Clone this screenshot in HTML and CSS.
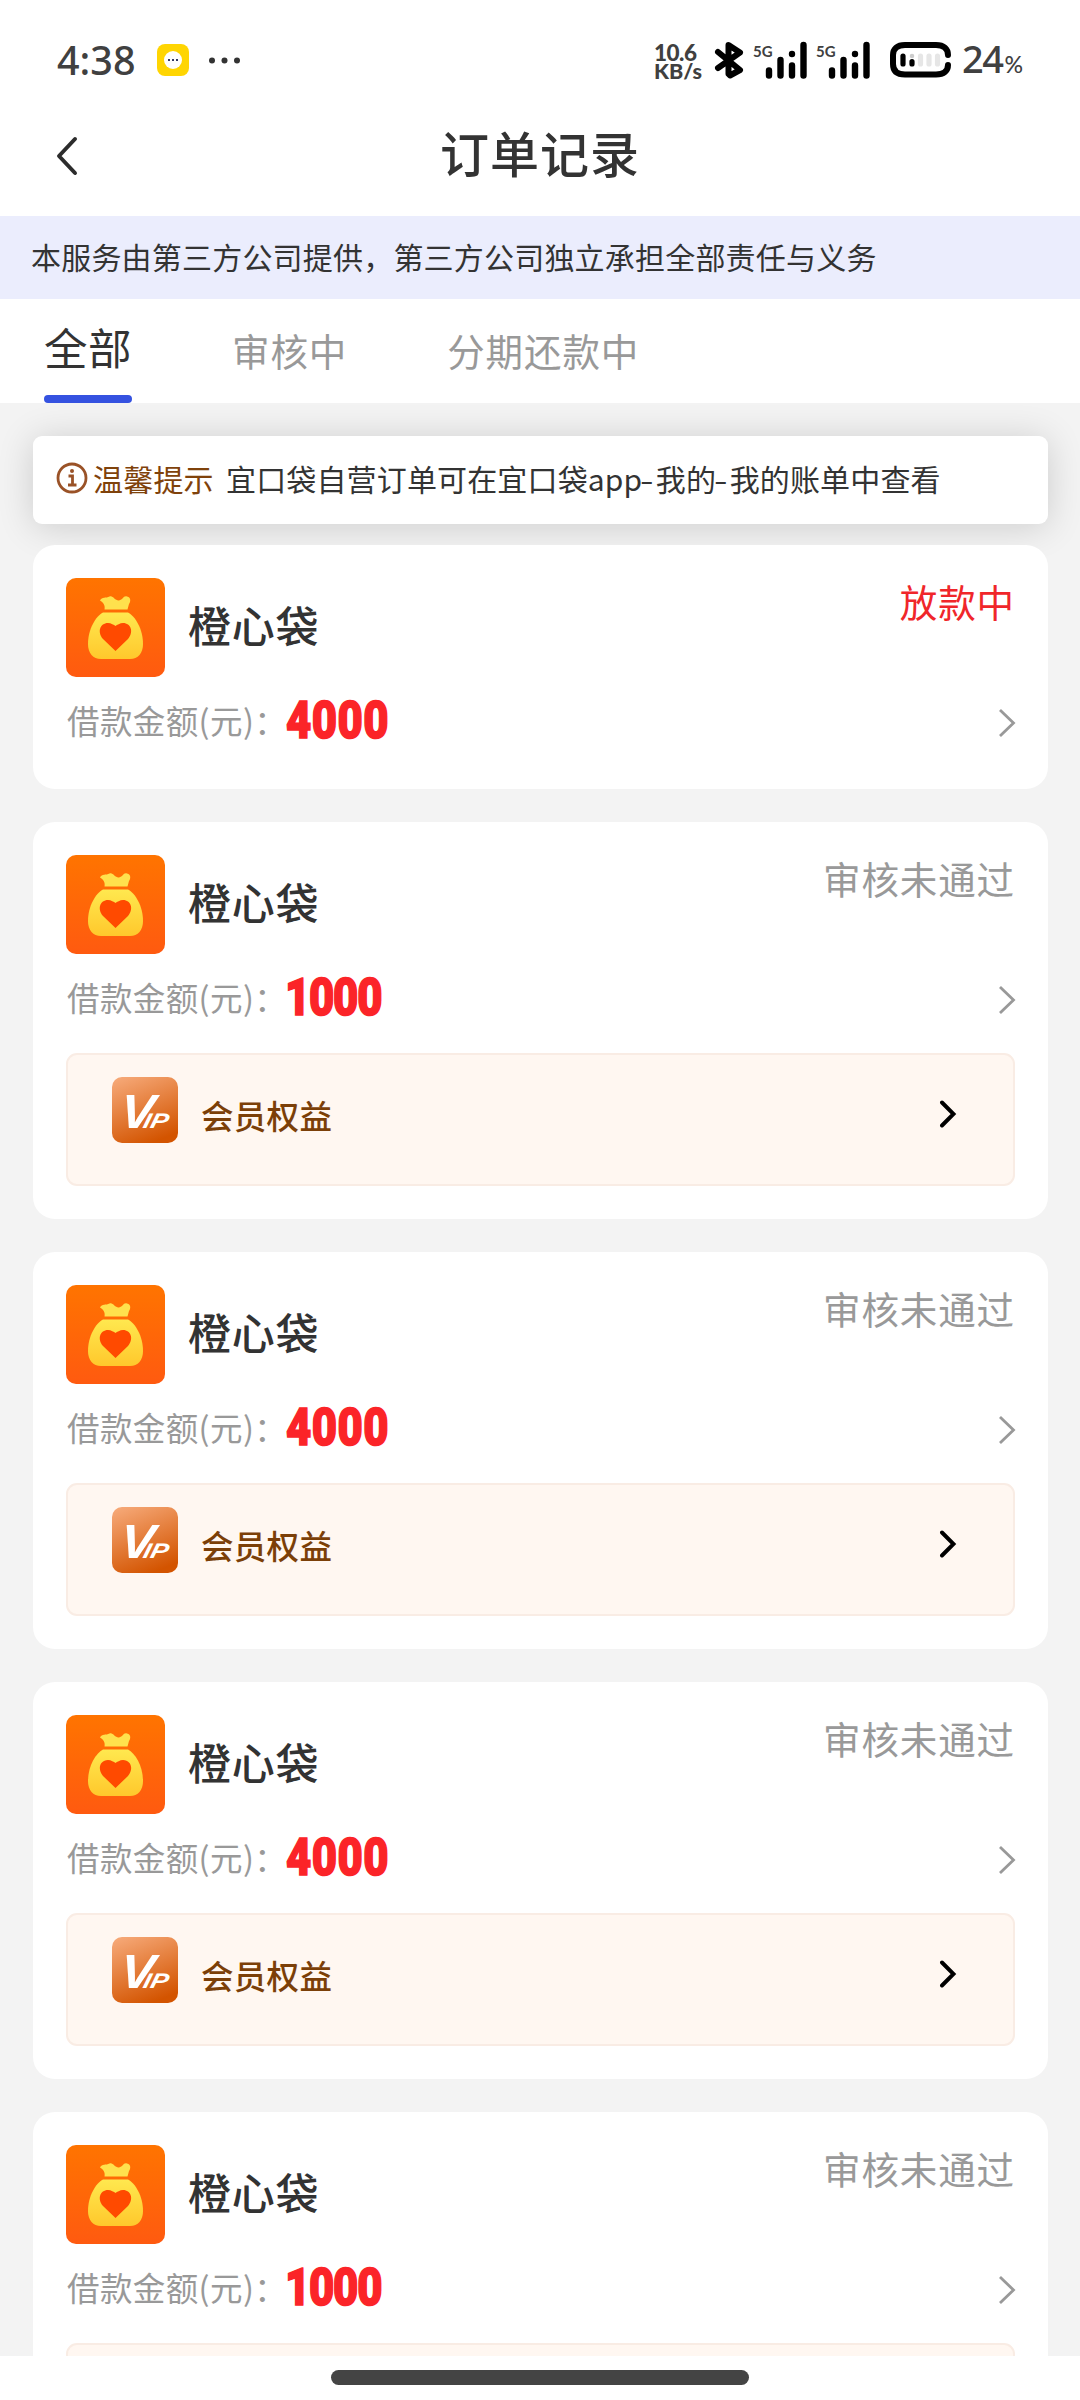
FILE: index.html
```html
<!DOCTYPE html>
<html lang="zh-CN">
<head>
<meta charset="utf-8">
<title>订单记录</title>
<link rel="stylesheet" href="styles.css">
</head>
<body>
<svg class="defs" width="0" height="0">
  <defs>
    <linearGradient id="orange" x1="0" y1="0" x2="0" y2="1"><stop offset="0" stop-color="#ff7400"/><stop offset="1" stop-color="#ff5a10"/></linearGradient>
    <linearGradient id="gold" x1="0" y1="0" x2="0" y2="1"><stop offset="0" stop-color="#ffe84f"/><stop offset="1" stop-color="#ffc82c"/></linearGradient>
    <linearGradient id="copper" x1="0.2" y1="0" x2="0.6" y2="1"><stop offset="0" stop-color="#f5a674"/><stop offset="1" stop-color="#d35400"/></linearGradient>
  </defs>
  <symbol id="logo" viewBox="0 0 99 99">
    <rect width="99" height="99" rx="10" fill="url(#orange)"/>
    <path d="M34 22.500C36 18.500 40 20.500 43.500 18.500C47 17 49 23 53 22.500C57 22 57 17.500 61 18.500C65.500 19.500 64.500 24 63 26L61.500 31.500H38.500C39.500 27 37 24.500 34 22.500Z" fill="#ffe14d"/>
    <path d="M37 34.500H62C69 38 77 51 77 66C77 75 72 81 64 81H35C27 81 22 75 22 66C22 51 30 38 37 34.500Z" fill="url(#gold)"/>
    <path d="M49.500 73L37 61C31 54 34 45 42 45C45 45 48 47 49.500 48C51 47 54 45 57 45C65 45 68 54 62 61Z" fill="#ff4a00"/>
  </symbol>
  <symbol id="vip" viewBox="0 0 66 66">
    <rect width="66" height="66" rx="10" fill="url(#copper)"/>
    <text class="vip-text" transform="translate(7 50.500) skewX(-6)" textLength="34" lengthAdjust="spacingAndGlyphs">V</text>
    <text class="vip-text vip-ip" transform="translate(30 50.500) skewX(-14)" textLength="25" lengthAdjust="spacingAndGlyphs">IP</text>
  </symbol>
  <symbol id="next" viewBox="0 0 18 30"><path d="M2 2L15.500 15L2 28" fill="none" stroke="currentColor" stroke-width="2.800"/></symbol>
  <symbol id="more" viewBox="0 0 18 28"><path d="M3 2.500L14.500 14L3 25.500" fill="none" stroke="currentColor" stroke-width="3.900" stroke-linecap="round"/></symbol>
  <symbol id="signal" viewBox="0 0 42 38">
    <path d="M4 29.500V34.500M15.500 19V34.500M27 24.500V34.500M27 12.900V13.100M38.500 4V34.500" fill="none" stroke="#000" stroke-width="6.400" stroke-linecap="round"/>
  </symbol>
</svg>

<header class="status-bar">
  <div class="clock">4:38</div>
  <svg class="app-badge" viewBox="0 0 32 32"><rect width="32" height="32" rx="8" fill="#ffd502"/><circle cx="16" cy="16" r="9" fill="#fff"/><path d="M11 15h2v2h-2zM15 15h2v2h-2zM19 15h2v2h-2z" fill="#333a66"/></svg>
  <svg class="dots" viewBox="0 0 31 7"><g fill="#333"><circle cx="3" cy="3.500" r="3"/><circle cx="15.500" cy="3.500" r="3"/><circle cx="28" cy="3.500" r="3"/></g></svg>
  <div class="speed"><span class="rate">10.6</span><span>KB/s</span></div>
  <svg class="bluetooth" viewBox="0 0 30 38"><path d="M4 11L26 29L16 34.500L14.500 33V4L26 11.500L4 27" fill="none" stroke="#000" stroke-width="6" stroke-linejoin="round" stroke-linecap="round"/></svg>
  <div class="network"><span>5G</span><svg><use href="#signal"/></svg></div>
  <div class="network second"><span>5G</span><svg><use href="#signal"/></svg></div>
  <svg class="battery" viewBox="0 0 61 36"><path d="M58 13C58 7 54 3 46 3H15C7 3 3 7 3 13V22C3 29 7 32.500 15 32.500H46C54 32.500 58 29 58 23" fill="none" stroke="#000" stroke-width="6" stroke-linecap="round"/><path d="M13 14V22M22 19.500V22" stroke="#000" stroke-width="5.200" stroke-linecap="round"/><path d="M22 14V14.100" stroke="#ccc" stroke-width="4.500" stroke-linecap="round"/><path d="M30.500 14V22M39 14V22M47.500 14V22" stroke="#e6e6e6" stroke-width="5.200" stroke-linecap="round"/></svg>
  <div class="percent">24<small>%</small></div>
</header>

<nav class="title-bar">
  <svg class="back" viewBox="0 0 24 40"><path d="M20 3L4 20L20 37" fill="none" stroke="#2c2c2c" stroke-width="4" stroke-linecap="round" stroke-linejoin="round"/></svg>
  <h1>订单记录</h1>
</nav>

<p class="banner">本服务由第三方公司提供，第三方公司独立承担全部责任与义务</p>

<div class="tabs">
  <div class="tab active">全部</div>
  <div class="tab">审核中</div>
  <div class="tab">分期还款中</div>
</div>

<main class="content">
  <div class="notice">
    <svg class="info" viewBox="0 0 32 32"><circle cx="16" cy="16" r="14" fill="none" stroke="#9a5227" stroke-width="2.800"/><circle cx="16" cy="9" r="2" fill="#9a5227"/><path d="M12.500 14H16.500V22.500M12 23H20.500" fill="none" stroke="#9a5227" stroke-width="2.800"/></svg>
    <strong>温馨提示</strong>
    <span>宜口袋自营订单可在宜口袋app<i>-</i>我的<i>-</i>我的账单中查看</span>
  </div>

  <section class="card">
    <div class="card-head"><svg class="logo"><use href="#logo"/></svg><h2>橙心袋</h2><span class="state lending">放款中</span></div>
    <div class="amount-row"><span class="label">借款金额(元)：</span><b class="amount">4000</b><svg class="next"><use href="#next"/></svg></div>
  </section>

  <section class="card">
    <div class="card-head"><svg class="logo"><use href="#logo"/></svg><h2>橙心袋</h2><span class="state">审核未通过</span></div>
    <div class="amount-row"><span class="label">借款金额(元)：</span><b class="amount narrow">1000</b><svg class="next"><use href="#next"/></svg></div>
    <div class="member"><svg class="vip"><use href="#vip"/></svg><span>会员权益</span><svg class="more"><use href="#more"/></svg></div>
  </section>

  <section class="card">
    <div class="card-head"><svg class="logo"><use href="#logo"/></svg><h2>橙心袋</h2><span class="state">审核未通过</span></div>
    <div class="amount-row"><span class="label">借款金额(元)：</span><b class="amount">4000</b><svg class="next"><use href="#next"/></svg></div>
    <div class="member"><svg class="vip"><use href="#vip"/></svg><span>会员权益</span><svg class="more"><use href="#more"/></svg></div>
  </section>

  <section class="card">
    <div class="card-head"><svg class="logo"><use href="#logo"/></svg><h2>橙心袋</h2><span class="state">审核未通过</span></div>
    <div class="amount-row"><span class="label">借款金额(元)：</span><b class="amount">4000</b><svg class="next"><use href="#next"/></svg></div>
    <div class="member"><svg class="vip"><use href="#vip"/></svg><span>会员权益</span><svg class="more"><use href="#more"/></svg></div>
  </section>

  <section class="card">
    <div class="card-head"><svg class="logo"><use href="#logo"/></svg><h2>橙心袋</h2><span class="state">审核未通过</span></div>
    <div class="amount-row"><span class="label">借款金额(元)：</span><b class="amount narrow">1000</b><svg class="next"><use href="#next"/></svg></div>
    <div class="member"></div>
  </section>
</main>

<footer class="gesture-bar"><div class="pill"></div></footer>
</body>
</html>
```
FILE: styles.css
```css
* { box-sizing: border-box; }

body {
  display: flex;
  flex-direction: column;
  width: 1080px;
  height: 2400px;
  margin: 0;
  overflow: hidden;
  background: #fff;
  color: #333;
  font-family: "Noto Sans CJK SC", sans-serif;
  white-space: nowrap;
}

h1, h2, p { margin: 0; font-weight: 400; }
svg { display: block; flex: none; }
.defs { height: 0; }

/* status bar */
.status-bar {
  display: flex;
  flex: none;
  height: 120px;
  padding-left: 57px;
  align-items: center;
  font-family: Lato, sans-serif;
  color: #404040;
}
.clock { width: 100px; font-size: 39.500px; font-weight: 500; font-family: "Noto Sans", sans-serif; line-height: 60px; }
.app-badge { width: 32px; height: 32px; }
.dots { width: 31px; height: 7px; margin-left: 20px; }
.speed {
  display: flex;
  flex-direction: column;
  width: 60px;
  margin-left: 414px;
  font-size: 21.500px;
  font-weight: 900;
  line-height: 19px;
  padding-top: 3px;
}
.rate { font-size: 22.500px; letter-spacing: -.5px; }
.bluetooth { width: 30px; height: 38px; }
.network { display: flex; width: 54px; margin-left: 9px; align-items: flex-start; }
.network.second { margin-left: 9px; }
.network span { width: 12px; font-size: 15px; font-weight: 700; line-height: 20px; }
.network svg { width: 42px; height: 38px; }
.battery { width: 61px; height: 36px; margin-left: 20px; }
.percent { margin-left: 11px; padding-top: 2px; font-family: "Noto Sans", sans-serif; font-size: 38px; font-weight: 500; letter-spacing: -1.500px; line-height: 60px; }
.percent small { margin-left: 2px; font-family: Lato, sans-serif; font-size: 23px; letter-spacing: 0; }

/* title bar */
.title-bar {
  display: grid;
  flex: none;
  grid-template-columns: 56px 1fr 56px;
  height: 96px;
  align-items: start;
}
.back { width: 24px; height: 40px; margin: 16px 0 0 55px; }
.title-bar h1 { text-align: center; font-size: 49px; font-weight: 500; letter-spacing: 1px; line-height: 64px; }

.banner {
  flex: none;
  height: 83px;
  padding-left: 31px;
  background: #ebedfd;
  font-size: 30px;
  letter-spacing: .2px;
  line-height: 80px;
}

/* tabs */
.tabs { display: flex; flex: none; height: 104px; padding-left: 44px; gap: 100px; }
.tab { height: 104px; color: #999; font-size: 37.500px; letter-spacing: .9px; line-height: 102px; }
.tab.active {
  display: flex;
  flex-direction: column;
  width: 88px;
  color: #333;
  font-size: 43.500px;
  letter-spacing: .5px;
  line-height: 96px;
}
.tab.active::before { content: ""; height: 2px; margin-bottom: -2px; }
.tab.active::after { content: ""; height: 8px; border-radius: 4px; background: #3552e0; }

/* list */
.content { flex: none; height: 1953px; padding: 33px 32px 0 33px; overflow: hidden; background: #f3f3f3; }
.notice {
  display: flex;
  height: 88px;
  padding: 0 0 4px 23px;
  align-items: center;
  border-radius: 9px;
  background: #fff;
  box-shadow: 0 3px 36px rgba(0, 0, 0, .16);
  font-size: 30px;
  line-height: 44px;
}
.info { width: 32px; height: 32px; margin-right: 5px; }
.notice strong { width: 133px; color: #7f420b; font-weight: 400; letter-spacing: .2px; }
.notice span { letter-spacing: .15px; }
.notice i { display: inline-block; width: 13.500px; font-style: normal; transform: scaleX(1.300); }

.card {
  margin-bottom: 33px;
  padding: 33px 33px 22px;
  border-radius: 22px;
  background: #fff;
}
.notice + .card { margin-top: 21px; position: relative; }
.card:has(.member) { padding-bottom: 33px; }
.card-head { display: flex; height: 99px; align-items: flex-start; }
.logo { width: 99px; height: 99px; }
.card h2 { flex: 1; padding-left: 23px; font-size: 43px; font-weight: 500; letter-spacing: .8px; line-height: 93px; }
.state { color: #999; font-size: 37.500px; letter-spacing: .9px; line-height: 46px; }
.state.lending { color: #f0262a; }
.amount-row { display: flex; height: 90px; align-items: center; }
.label { width: 220px; padding: 0 0 4px 1px; color: #999; font-size: 32.500px; letter-spacing: .4px; line-height: 44px; }
.amount {
  flex: 1;
  padding-bottom: 3px;
  color: #fb2428;
  font-family: Roboto, sans-serif;
  font-size: 52px;
  font-weight: 900;
  line-height: 60px;
  transform: scaleX(.840);
  transform-origin: left;
  -webkit-text-stroke: 1.600px #fb2428;
  letter-spacing: .5px;
}
.amount.narrow { letter-spacing: -1.500px; margin-left: -1px; }
.next { width: 18px; height: 30px; margin: 2px -1px 0 0; color: #999; }

.member {
  display: flex;
  height: 133px;
  margin-top: 9px;
  padding: 22px 56px 0 44px;
  align-items: flex-start;
  border: 2px solid #f9ece4;
  border-radius: 11px;
  background: #fff7f1;
}
.vip { width: 66px; height: 66px; }
.vip-text { fill: #fff; font-family: "Liberation Sans", sans-serif; font-size: 48px; font-style: italic; font-weight: 700; }
.vip-ip { font-size: 21px; }
.member span { flex: 1; padding-left: 23px; color: #7b3f08; font-size: 32.500px; font-weight: 500; letter-spacing: .3px; line-height: 76px; }
.more { width: 18px; height: 28px; margin-top: 23px; color: #000; }

.gesture-bar { display: flex; flex: none; height: 44px; padding-top: 14px; justify-content: center; background: #fff; }
.pill { width: 418px; height: 15px; border-radius: 8px; background: #444; }
```
